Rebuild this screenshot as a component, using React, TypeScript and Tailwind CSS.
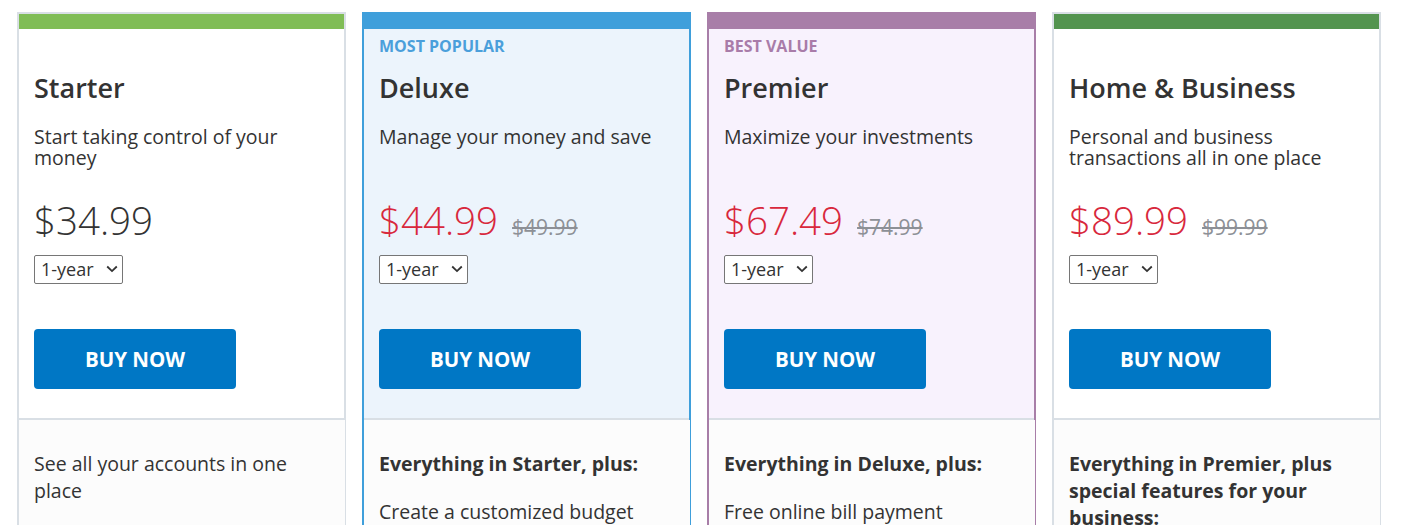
import React from "react";

type Plan = {
  name: string;
  badge?: string;
  badgeColor?: string;
  description: string;
  price: string;
  oldPrice?: string;
  bar: string;
  border: string;
  bg: string;
  lead?: string;
  features: string[];
};

const plans: Plan[] = [
  {
    name: "Starter",
    description: "Start taking control of your money",
    price: "$34.99",
    bar: "bg-[#80bd56]",
    border: "border-[#d9dfe5]",
    bg: "bg-white",
    features: ["See all your accounts in one place"],
  },
  {
    name: "Deluxe",
    badge: "MOST POPULAR",
    badgeColor: "text-[#4a9fdb]",
    description: "Manage your money and save",
    price: "$44.99",
    oldPrice: "$49.99",
    bar: "bg-[#3f9fdb]",
    border: "border-[#3f9fdb]",
    bg: "bg-[#ecf4fc]",
    lead: "Everything in Starter, plus:",
    features: ["Create a customized budget"],
  },
  {
    name: "Premier",
    badge: "BEST VALUE",
    badgeColor: "text-[#a97ca9]",
    description: "Maximize your investments",
    price: "$67.49",
    oldPrice: "$74.99",
    bar: "bg-[#a87ea8]",
    border: "border-[#a87ea8]",
    bg: "bg-[#f8f2fd]",
    lead: "Everything in Deluxe, plus:",
    features: ["Free online bill payment"],
  },
  {
    name: "Home & Business",
    description: "Personal and business transactions all in one place",
    price: "$89.99",
    oldPrice: "$99.99",
    bar: "bg-[#53944f]",
    border: "border-[#d9dfe5]",
    bg: "bg-white",
    lead: "Everything in Premier, plus special features for your business:",
    features: [],
  },
];

function TermSelect() {
  return (
    <div className="relative mt-[12px] w-[89px] h-[29px]">
      <select className="appearance-none w-full h-full border border-[#767676] rounded-[2px] bg-white pl-[6px] text-[18px] leading-[27px] text-[#333]">
        <option>1-year</option>
        <option>2-year</option>
      </select>
      {/* chevron over the native select */}
      <svg
        className="pointer-events-none absolute right-[5px] top-[10px]"
        width="12"
        height="8"
        viewBox="0 0 12 8"
        fill="none"
      >
        <path d="M1.2 1.5l4.8 4.6 4.8-4.6" stroke="#333" strokeWidth="1.8" />
      </svg>
    </div>
  );
}

function PlanCard({ plan }: { plan: Plan }) {
  return (
    <div className="flex flex-col w-[329px]">
      {/* Upper panel */}
      <div className={`border-2 border-b-0 ${plan.border} ${plan.bg}`}>
        <div className={`h-[15px] ${plan.bar}`} />
        <div className="px-[15px] pt-[6px] pb-[29px] border-b-2 border-[#d9dfe5]">
          <div className={`h-[22px] text-[16px] leading-[22px] font-bold ${plan.badgeColor ?? ""}`}>
            {plan.badge}
          </div>
          <h3 className="mt-[14px] text-[27px] leading-[34px] font-semibold text-[#333]">
            {plan.name}
          </h3>
          <p className="mt-[21px] h-[42px] text-[19.5px] leading-[21px] text-[#333]">
            {plan.description}
          </p>
          <div className="mt-[29px] flex items-baseline gap-[14px] h-[46px]">
            <span
              className={`text-[38.5px] leading-[46px] font-light ${
                plan.oldPrice ? "text-[#d8283c]" : "text-[#333]"
              }`}
            >
              {plan.price}
            </span>
            {plan.oldPrice && (
              <span className="text-[21px] text-[#8d9096] line-through">{plan.oldPrice}</span>
            )}
          </div>
          <TermSelect />
          <button className="mt-[45px] w-[202px] h-[60px] rounded-[4px] bg-[#0077c5] text-white text-[20.5px] font-bold">
            BUY NOW
          </button>
        </div>
      </div>

      {/* Features panel */}
      <div
        className={`flex-1 min-h-[200px] border-l-2 border-r ${plan.border} bg-[#fcfcfc] px-[15px] pt-[30px] text-[19.5px] leading-[27px] text-[#333]`}
      >
        {plan.lead && <p className="font-bold">{plan.lead}</p>}
        {plan.features.map((f, i) => (
          <p key={f} className={plan.lead || i > 0 ? "mt-[21px]" : ""}>
            {f}
          </p>
        ))}
      </div>
    </div>
  );
}

export default function App() {
  return (
    <div
      className="bg-white h-[525px] overflow-hidden"
      style={{ fontFamily: '"Open Sans", "Noto Sans", Arial, sans-serif' }}
    >
      <div className="flex gap-[16px] pl-[17px] pt-[12px]">
        {plans.map((p) => (
          <PlanCard key={p.name} plan={p} />
        ))}
      </div>
    </div>
  );
}
